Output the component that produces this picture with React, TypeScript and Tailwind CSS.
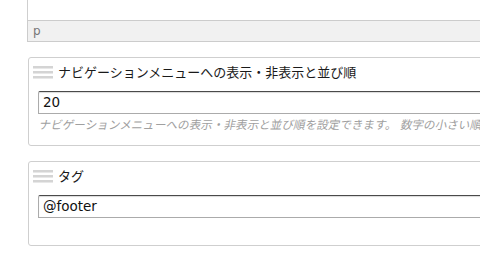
import React from "react";

const jp = { fontFamily: '"DejaVu Sans", "Noto Sans CJK JP", sans-serif' };

function Handle() {
  return (
    <div className="flex flex-col gap-[2px] w-[20px]">
      {[0, 1, 2].map((i) => (
        <div key={i} className="h-[3px] bg-[#d4d4d4] border-b border-[#e8e8e8]" />
      ))}
    </div>
  );
}

function Field({ title, value, hint, tall }: { title: string; value: string; hint?: string; tall?: boolean }) {
  return (
    <div
      className={`ml-[28px] w-[520px] border border-[#cfcfcf] rounded-[3px] bg-white ${tall ? "h-[89px]" : "h-[85px]"}`}
    >
      <div className="flex items-center gap-[5px] pl-[4px] pt-[3px] h-[25px]">
        <Handle />
        <span className="text-[13px] text-[#1a1a1a] leading-none" style={jp}>
          {title}
        </span>
      </div>
      <div className="pl-[9px] mt-[6px]">
        <input
          readOnly
          value={value}
          className="w-full h-[23px] px-[4px] text-[13.5px] text-[#111] bg-white border border-[#ababab] border-t-[#4a4a4a] rounded-tl-[2px] shadow-[inset_0_1px_1px_rgba(0,0,0,0.15)] outline-none"
          style={jp}
        />
        {hint && (
          <p
            className="mt-[6px] text-[11.6px] not-italic -skew-x-12 origin-bottom-left text-[#a0a0a0] whitespace-nowrap leading-none"
            style={jp}
          >
            {hint}
          </p>
        )}
      </div>
    </div>
  );
}

export default function App() {
  return (
    <div className="w-[480px] h-[255px] overflow-hidden bg-white">
      {/* editor bottom */}
      <div className="ml-[27px] w-[520px]">
        <div className="h-[20px] border-x border-[#cfcfcf] bg-white" />
        <div className="h-[22px] border border-[#cccccc] bg-[#f1f1f1] flex items-center pl-[5px] text-[12px] text-[#777]" style={jp}>
          p
        </div>
      </div>
      <div className="flex flex-col gap-[15px] mt-[15px]">
        <Field
          title="ナビゲーションメニューへの表示・非表示と並び順"
          value="20"
          hint="ナビゲーションメニューへの表示・非表示と並び順を設定できます。 数字の小さい順"
          tall
        />
        <Field title="タグ" value="@footer" />
      </div>
    </div>
  );
}
